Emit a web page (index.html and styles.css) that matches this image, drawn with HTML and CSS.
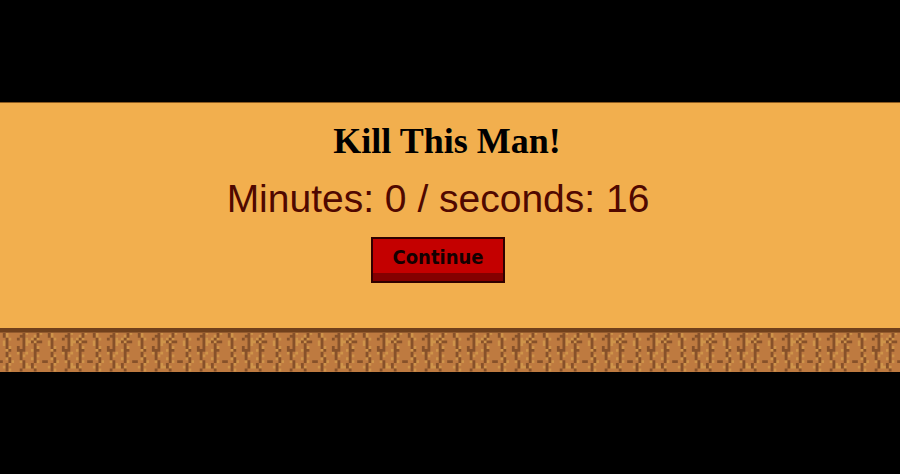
FILE: index.html
```
<!DOCTYPE html>
<html lang="en">
<head>
    <meta charset="utf-8">
    <title>Kill This Man!</title>
    <link rel="stylesheet" href="styles.css">
</head>
<body>
    <main class="panel">
        <h1>Kill This Man!</h1>
        <p class="timer">Minutes: 0 / seconds: 16</p>
        <button type="button" class="continue">Continue</button>
    </main>

    <!-- Ground strip -->
    <svg class="ground" aria-hidden="true">
        <defs>
            <pattern id="soil" width="45" height="45" patternUnits="userSpaceOnUse">
                <svg width="45" height="45" viewBox="0 0 16 16">
                    <rect width="16" height="16" fill="#be7a40"/>
                    <path stroke="#cf944a" d="M2 .5h1M2 1.5h1M3 2.5h1M1 3.5h1M1 4.5h1M3 5.5h1M2 6.5h1M3 8.5h1M2 9.5h1M4 10.5h1M3 11.5h1M1 12.5h1M3 13.5h1M9 .5h1M7 1.5h1M9 2.5h1M9 3.5h1M9 4.5h1M6 7.5h1M9 7.5h1M8 8.5h1M7 10.5h1M9 11.5h1M9 12.5h1M14 .5h1M12 1.5h1M11 2.5h1M13 2.5h1M10 3.5h1M12 3.5h1M13 5.5h1M11 6.5h1M13 8.5h1M11 9.5h1M13 10.5h1M10 12.5h1M12 12.5h1"/>
                    <path stroke="#87512a" d="M1 .5h1M1 1.5h1M2 2.5h1M2 3.5h1M2 4.5h1M2 5.5h1M3 6.5h1M2 7.5h1M2 8.5h1M3 9.5h1M3 10.5h1M2 11.5h1M2 12.5h1M2 13.5h1M8 .5h1M7 1.5h2M6 2.5h1M8 2.5h1M8 3.5h1M8 4.5h1M6 5.5h1M8 5.5h1M6 6.5h3M7 7.5h1M7 8.5h1M7 9.5h1M8 10.5h1M8 11.5h1M8 12.5h1M7 13.5h1M13 .5h1M13 1.5h1M12 2.5h1M11 3.5h1M13 3.5h1M14 3.5h1M12 4.5h1M12 5.5h1M12 6.5h2M12 7.5h1M12 8.5h1M12 9.5h1M0 10.5h1M12 10.5h1M15 10.5h1M11 11.5h1M11 12.5h1M12 13.5h1"/>
                </svg>
            </pattern>
        </defs>
        <rect width="100%" height="100%" fill="url(#soil)"/>
        <rect width="100%" height="1" fill="#935b2e"/>
    </svg>
</body>
</html>
```
FILE: styles.css
```
body {
    margin: 0;
    padding: 102px 0;
    background-color: #000;
}

.panel {
    display: flex;
    flex-direction: column;
    align-items: center;
    padding: 18px 24px 45px 0;
    background-color: #f2af4e;
    border-top: 1px solid #8a5a20;
}

h1 {
    margin: 0;
    padding-left: 18px;
    font: bold 36px/40px "Liberation Serif", serif;
    color: #000;
}

.timer {
    margin: 16px 0;
    font: 39px/44px "Liberation Sans", Arial, sans-serif;
    color: #500800;
}

.continue {
    padding: 4px 20px 10px;
    border: 2px solid #300000;
    background-color: #c40000;
    box-shadow: inset 0 -8px #840000;
    font: bold 20px/28px "DejaVu Sans Condensed", "DejaVu Sans", sans-serif;
    color: #140000;
}

.ground {
    display: block;
    width: 100%;
    height: 40px;
    border-top: 4px solid #70401c;
}
```
